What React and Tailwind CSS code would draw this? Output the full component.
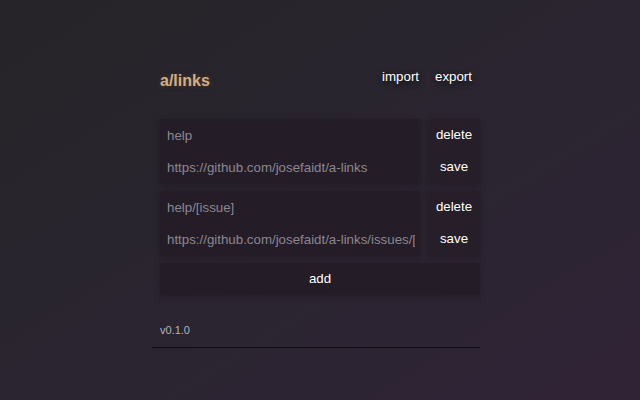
import { useState } from 'react';

const font = { fontFamily: '"Liberation Sans", Arial, sans-serif' };

function LinkRow({ name, url }) {
  return (
    <div className="flex gap-2">
      <div className="flex flex-1 flex-col bg-[#241d27] shadow-[0_2px_6px_rgba(0,0,0,0.25)]">
        <input
          className="h-8 bg-transparent pl-[7px] pr-[5px] text-[13.3px] text-[#8c8690] outline-none"
          defaultValue={name}
        />
        <input
          className="h-8 bg-transparent pl-[7px] pr-[5px] text-[13.3px] text-[#8c8690] outline-none"
          defaultValue={url}
        />
      </div>
      <div className="flex w-[52px] flex-col bg-[#261f29] shadow-[0_2px_6px_rgba(0,0,0,0.25)]">
        <button className="h-8 text-[13.3px] text-white">delete</button>
        <button className="h-8 text-[13.3px] text-white">save</button>
      </div>
    </div>
  );
}

export default function App() {
  const [links] = useState([
    { name: 'help', url: 'https://github.com/josefaidt/a-links' },
    { name: 'help/[issue]', url: 'https://github.com/josefaidt/a-links/issues/[issue]' },
  ]);

  return (
    <div
      className="min-h-[400px] w-full bg-gradient-to-br from-[#262428] via-[#2a2530] to-[#302336] pt-[61px]"
      style={font}
    >
      <div className="mx-auto w-[320px]">
        <header className="flex h-8 items-center justify-between">
          <h1 className="pt-[7px] text-[16px] font-bold text-[#d2ae88] [text-shadow:0_0_5px_rgba(120,80,40,0.5)]">
            a/links
          </h1>
          <div className="flex">
            <button className="px-2 text-[13.3px] text-white [text-shadow:0_2px_6px_rgba(0,0,0,0.7)]">import</button>
            <button className="px-2 text-[13.3px] text-white [text-shadow:0_2px_6px_rgba(0,0,0,0.7)]">export</button>
          </div>
        </header>

        <main className="mt-[26px] flex flex-col gap-2">
          {links.map((l) => (
            <LinkRow key={l.name} name={l.name} url={l.url} />
          ))}
          <button className="h-8 bg-[#241d27] text-[13.3px] text-white shadow-[0_2px_6px_rgba(0,0,0,0.2)]">
            add
          </button>
        </main>

        <footer className="-ml-2 mt-[27px] w-[328px] border-b border-[#0e0b10] pb-[9px] pl-2 text-[11px] leading-4">
          <span className="text-[#b8b2bb]">v0.1.0</span>
        </footer>
      </div>
    </div>
  );
}
